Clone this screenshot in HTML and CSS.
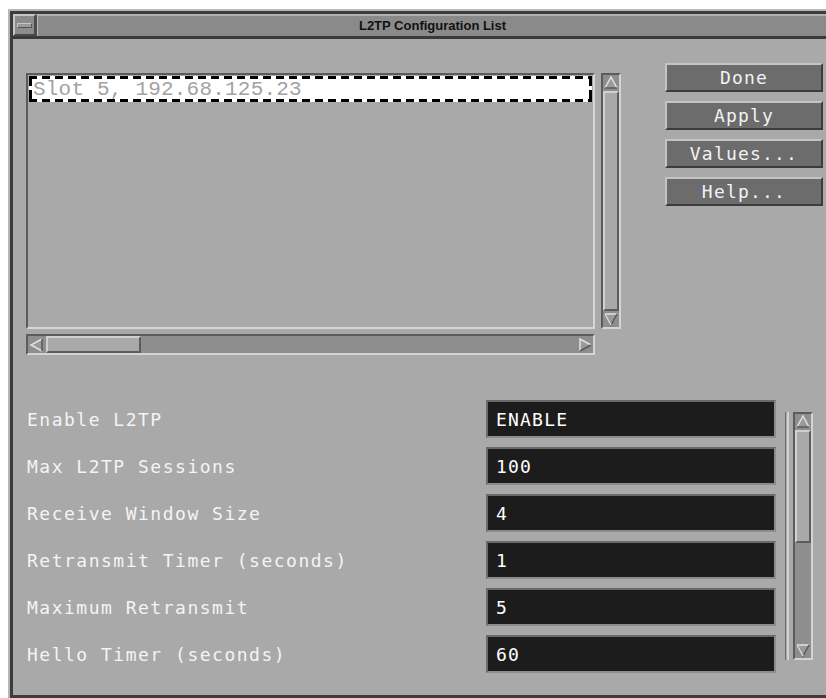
FILE: index.html
```html
<!DOCTYPE html>
<html>
<head>
<meta charset="utf-8">
<title>L2TP Configuration List</title>
<link rel="stylesheet" href="styles.css">
</head>
<body>
<div class="window">
  <div class="frame">
    <div class="titlebar">
      <div class="menu-btn"><span class="menu-dash"></span></div>
      <div class="title">L2TP Configuration List</div>
    </div>
    <div class="content">
      <div class="top">
        <div class="list-area">
          <div class="list-row">
            <div class="listbox">
              <div class="item selected">Slot 5, 192.68.125.23</div>
            </div>
            <div class="vscroll list-vscroll">
              <div class="arrow">
                <svg width="16" height="15" viewBox="0 0 16 15"><polygon points="8,2 14,13 2,13" fill="#9a9a9a"/><polyline points="2,13 8,2 14,13" fill="none" stroke="#e2e2e2" stroke-width="1.5"/><line x1="2" y1="13" x2="14" y2="13" stroke="#5a5a5a" stroke-width="1.5"/></svg>
              </div>
              <div class="thumb full"></div>
              <div class="arrow">
                <svg width="16" height="15" viewBox="0 0 16 15"><polygon points="2,2 14,2 8,13" fill="#9a9a9a"/><polyline points="2,2 14,2" fill="none" stroke="#e2e2e2" stroke-width="1.5"/><polyline points="2,2 8,13 14,2" fill="none" stroke="#5a5a5a" stroke-width="1.5"/><line x1="2" y1="2" x2="8" y2="13" stroke="#e2e2e2" stroke-width="1.5"/></svg>
              </div>
            </div>
          </div>
          <div class="hscroll">
            <div class="harrow">
              <svg width="15" height="15" viewBox="0 0 15 15"><polygon points="2,8 13,2 13,14" fill="#9a9a9a"/><polyline points="13,14 2,8 13,2" fill="none" stroke="#e2e2e2" stroke-width="1.5"/><line x1="13" y1="2" x2="13" y2="14" stroke="#5a5a5a" stroke-width="1.5"/></svg>
            </div>
            <div class="hthumb"></div>
            <div class="htrough"></div>
            <div class="harrow">
              <svg width="15" height="15" viewBox="0 0 15 15"><polygon points="2,2 13,8 2,14" fill="#9a9a9a"/><polyline points="2,14 2,2 13,8" fill="none" stroke="#e2e2e2" stroke-width="1.5"/><line x1="13" y1="8" x2="2" y2="14" stroke="#5a5a5a" stroke-width="1.5"/></svg>
            </div>
          </div>
        </div>
        <div class="buttons">
          <div class="btn">Done</div>
          <div class="btn">Apply</div>
          <div class="btn">Values...</div>
          <div class="btn">Help...</div>
        </div>
      </div>

      <div class="form">
        <div class="label">Enable L2TP</div>
        <div class="field">ENABLE</div>
        <div class="label">Max L2TP Sessions</div>
        <div class="field">100</div>
        <div class="label">Receive Window Size</div>
        <div class="field">4</div>
        <div class="label">Retransmit Timer (seconds)</div>
        <div class="field">1</div>
        <div class="label">Maximum Retransmit</div>
        <div class="field">5</div>
        <div class="label">Hello Timer (seconds)</div>
        <div class="field">60</div>

        <div class="form-scroll">
          <div class="etch"></div>
          <div class="vscroll field-vscroll">
            <div class="arrow">
              <svg width="16" height="15" viewBox="0 0 16 15"><polygon points="8,2 14,13 2,13" fill="#9a9a9a"/><polyline points="2,13 8,2 14,13" fill="none" stroke="#e2e2e2" stroke-width="1.5"/><line x1="2" y1="13" x2="14" y2="13" stroke="#5a5a5a" stroke-width="1.5"/></svg>
            </div>
            <div class="thumb part"></div>
            <div class="trough"></div>
            <div class="arrow">
              <svg width="16" height="15" viewBox="0 0 16 15"><polygon points="2,2 14,2 8,13" fill="#9a9a9a"/><polyline points="2,2 14,2" fill="none" stroke="#e2e2e2" stroke-width="1.5"/><polyline points="2,2 8,13 14,2" fill="none" stroke="#5a5a5a" stroke-width="1.5"/><line x1="2" y1="2" x2="8" y2="13" stroke="#e2e2e2" stroke-width="1.5"/></svg>
            </div>
          </div>
        </div>
      </div>
    </div>
  </div>
</div>
</body>
</html>
```

FILE: styles.css
```css
html, body {
  margin: 0;
  padding: 0;
  background: #ffffff;
}

body {
  width: 826px;
  height: 698px;
  overflow: hidden;
  font-family: "DejaVu Sans Mono", monospace;
}

/* outer window frame: thin light rim, then a dark rim */
.window {
  margin: 9px 0 0 8px;
  width: 818px;
  border-top: 2px solid #b6b6b6;
  border-left: 2px solid #b6b6b6;
  border-bottom: 1px solid #b6b6b6;
}

.frame {
  border-top: 3px solid #3c3c3c;
  border-left: 3px solid #3c3c3c;
  border-bottom: 3px solid #3c3c3c;
}

/* title bar */
.titlebar {
  display: flex;
  height: 22px;
  border-bottom: 3px solid #3a3a3a;
  background: #8a8a8a;
}

.menu-btn {
  width: 19px;
  height: 18px;
  border: 2px solid;
  border-color: #c6c6c6 #4a4a4a #4a4a4a #c6c6c6;
  background: #8c8c8c;
  display: flex;
  align-items: center;
  justify-content: center;
}

.menu-dash {
  display: block;
  width: 13px;
  height: 3px;
  border: 1px solid;
  border-color: #c8c8c8 #555555 #555555 #c8c8c8;
  background: #9a9a9a;
}

.title {
  flex: 1;
  border-left: 1px solid #4a4a4a;
  border-top: 2px solid #b0b0b0;
  box-shadow: inset 1px 0 0 #bdbdbd;
  font-family: "Liberation Sans", Arial, sans-serif;
  font-weight: bold;
  font-size: 13px;
  color: #111111;
  display: flex;
  align-items: center;
  justify-content: center;
  padding-bottom: 2px;
}

/* client area */
.content {
  background: #a9a9a9;
  height: 656px;
}

.top {
  display: flex;
  align-items: flex-start;
  padding-left: 13px;
}

.list-area {
  margin-top: 34px;
  display: flex;
  flex-direction: column;
}

.list-row {
  display: flex;
  gap: 6px;
}

.listbox {
  width: 565px;
  height: 252px;
  border: 2px solid;
  border-color: #5a5a5a #d6d6d6 #d6d6d6 #5a5a5a;
}

.item {
  margin: 1px 1px 0 1px;
  height: 26px;
  box-sizing: border-box;
  padding: 4px 0 0 4px;
  font-family: "Liberation Mono", "Courier New", monospace;
  font-size: 21px;
  line-height: 20px;
  letter-spacing: 0.2px;
  color: #a2a2a2;
  white-space: nowrap;
}

/* keyboard-focus dashes round the selected entry */
.selected {
  background:
    repeating-linear-gradient(90deg, #000 0 8px, transparent 8px 13px) top left / 100% 3px no-repeat,
    repeating-linear-gradient(90deg, #000 0 8px, transparent 8px 13px) bottom left / 100% 3px no-repeat,
    repeating-linear-gradient(180deg, #000 0 10px, transparent 10px 14px) top left / 3px 100% no-repeat,
    repeating-linear-gradient(180deg, #000 0 10px, transparent 10px 14px) top right / 3px 100% no-repeat,
    #ffffff;
}

/* scrollbars */
.vscroll {
  width: 16px;
  border: 2px solid;
  border-color: #5c5c5c #d4d4d4 #d4d4d4 #5c5c5c;
  background: #8e8e8e;
  display: flex;
  flex-direction: column;
}

.list-vscroll {
  height: 252px;
}

.arrow {
  height: 15px;
  flex: none;
  display: flex;
  align-items: center;
  justify-content: center;
}

.arrow svg, .harrow svg {
  display: block;
}

.thumb {
  margin: 1px 0;
  border: 2px solid;
  border-color: #d0d0d0 #5c5c5c #5c5c5c #d0d0d0;
  background: #a9a9a9;
}

.thumb.full {
  flex: 1;
}

.thumb.part {
  height: 109px;
  flex: none;
}

.trough {
  flex: 1;
}

.hscroll {
  margin-top: 5px;
  width: 565px;
  height: 17px;
  border: 2px solid;
  border-color: #5c5c5c #d4d4d4 #d4d4d4 #5c5c5c;
  background: #8e8e8e;
  display: flex;
  align-items: stretch;
}

.harrow {
  width: 16px;
  flex: none;
  display: flex;
  align-items: center;
  justify-content: center;
}

.hthumb {
  width: 91px;
  margin-left: 2px;
  border: 2px solid;
  border-color: #d0d0d0 #5c5c5c #5c5c5c #d0d0d0;
  background: #a9a9a9;
}

.htrough {
  flex: 1;
}

/* push buttons */
.buttons {
  margin-top: 24px;
  margin-left: 44px;
  display: flex;
  flex-direction: column;
  gap: 9px;
}

.btn {
  width: 154px;
  height: 25px;
  border: 2px solid;
  border-color: #c4c4c4 #3c3c3c #3c3c3c #c4c4c4;
  background: #6c6c6c;
  color: #f2f2f2;
  font-size: 18px;
  letter-spacing: 1.2px;
  line-height: 25px;
  text-align: center;
}

/* parameter form */
.form {
  margin-top: 45px;
  display: grid;
  grid-template-columns: 464px 290px 28px;
  grid-auto-rows: 38px;
  row-gap: 9px;
  column-gap: 9px;
}

.label {
  grid-column: 1;
  padding-left: 14px;
  display: flex;
  align-items: center;
  color: #f4f4f4;
  font-size: 18px;
  letter-spacing: 1.5px;
  white-space: nowrap;
}

.field {
  grid-column: 2;
  border: 2px solid;
  border-color: #6a6a6a #8c8c8c #8c8c8c #6a6a6a;
  background: #1c1c1c;
  color: #ffffff;
  padding-left: 8px;
  display: flex;
  align-items: center;
  font-size: 18px;
  letter-spacing: 1.2px;
}

.form-scroll {
  grid-column: 3;
  grid-row: 1 / 7;
  align-self: start;
  margin-top: 12px;
  height: 248px;
  display: flex;
}

.etch {
  width: 1px;
  border-left: 1px solid #6c6c6c;
  border-right: 2px solid #d2d2d2;
  margin-right: 4px;
}

.field-vscroll {
  height: 244px;
}
```
